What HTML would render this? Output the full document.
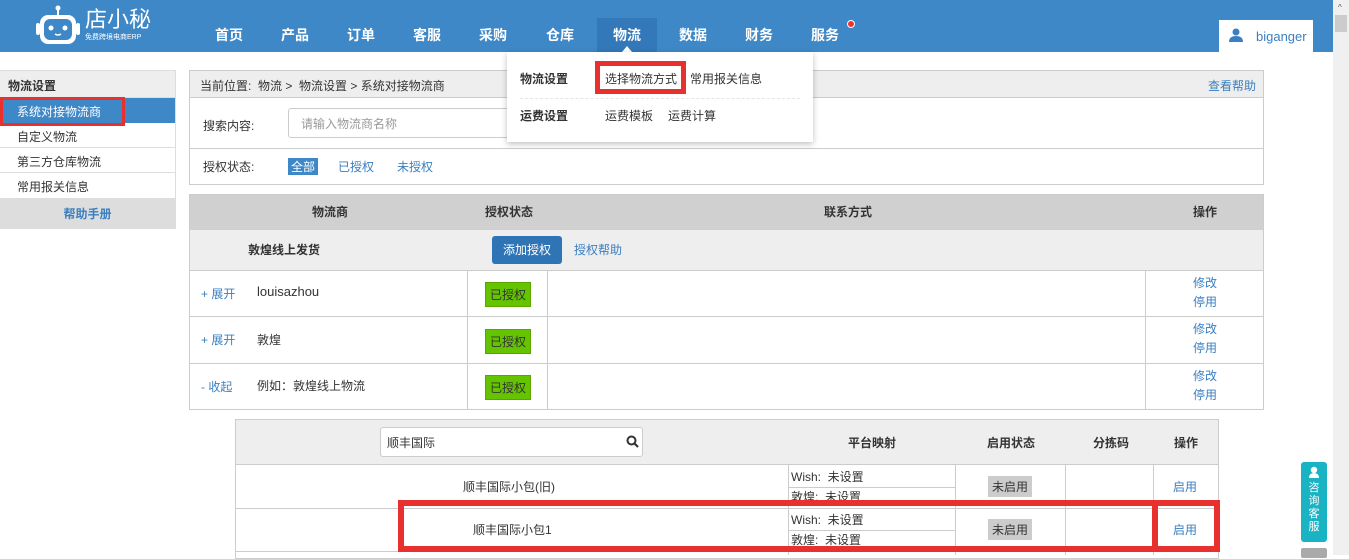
<!DOCTYPE html>
<html><head><meta charset="utf-8"><style>
*{margin:0;padding:0;box-sizing:border-box}
body{width:1349px;height:555px;overflow:hidden;position:relative;background:#fff;font-family:"Liberation Sans","Noto Sans CJK SC",sans-serif;font-size:12px;color:#333}
.a{position:absolute}
.nav{position:absolute;top:25px;font-size:14px;font-weight:bold;color:#fff;transform:translateX(-50%)}
.blue{color:#3a7fc0}
.bd{border:1px solid #ccc}
.c{text-align:center}
.tag{background:#65c400;color:#333;padding:3px 4px;font-size:12px;border:1px solid #5aa500}
</style></head><body>
<div class="a" style="left:0;top:0;width:1333px;height:52px;background:#3f88c8"></div>
<div class="a" style="left:597px;top:18px;width:60px;height:34px;background:#3378b8"></div>
<div class="a" style="left:622px;top:46px;width:0;height:0;border-left:5px solid transparent;border-right:5px solid transparent;border-bottom:6px solid #fff"></div>
<svg class="a" style="left:36px;top:4px" width="46" height="42" viewBox="0 0 46 42">
<circle cx="22" cy="4" r="2.5" fill="#fff"/><rect x="21" y="5" width="2" height="6" fill="#fff"/>
<rect x="4" y="11" width="36" height="29" rx="8" fill="#fff"/>
<rect x="0" y="19" width="4" height="12" rx="2" fill="#fff"/><rect x="40" y="19" width="4" height="12" rx="2" fill="#fff"/>
<rect x="8" y="15" width="28" height="21" rx="6" fill="#3f88c8"/>
<circle cx="15" cy="24" r="2.5" fill="#fff"/><circle cx="29" cy="24" r="2.5" fill="#fff"/>
<path d="M19 30 q3 2 6 0" stroke="#fff" stroke-width="1.5" fill="none"/>
</svg>
<div class="a" style="left:85px;top:8px;font-size:22px;color:#fff;line-height:24px">店小秘</div>
<div class="a" style="left:85px;top:34px;font-size:7px;color:#fff;line-height:8px">免费跨境电商ERP</div>
<div class="nav" style="left:229px">首页</div><div class="nav" style="left:295px">产品</div><div class="nav" style="left:361px">订单</div><div class="nav" style="left:427px">客服</div><div class="nav" style="left:493px">采购</div><div class="nav" style="left:560px">仓库</div><div class="nav" style="left:627px">物流</div><div class="nav" style="left:693px">数据</div><div class="nav" style="left:759px">财务</div><div class="nav" style="left:825px">服务</div>
<div class="a" style="left:847px;top:20px;width:8px;height:8px;border-radius:50%;background:#e33;border:1px solid #fff"></div>
<div class="a" style="left:1219px;top:20px;width:94px;height:32px;background:#fff"></div>
<svg class="a" style="left:1228px;top:28px" width="16" height="15"><circle cx="8" cy="4" r="3.5" fill="#3a7fc0"/><path d="M1 14 q0-6 7-6 q7 0 7 6z" fill="#3a7fc0"/></svg>
<div class="a" style="left:1256px;top:29px;font-size:13px;color:#3a7fc0">biganger</div>
<div class="a" style="left:1333px;top:0;width:16px;height:555px;background:#f0f0f0"></div>
<div class="a" style="left:1335px;top:15px;width:12px;height:17px;background:#ccc"></div>
<div class="a" style="left:1338px;top:3px;font-size:8px;color:#555">^</div>
<div class="a bd" style="left:-1px;top:70px;width:177px;height:159px;border-color:#ddd"></div>
<div class="a" style="left:0;top:71px;width:175px;height:27px;background:#eee;font-weight:bold;padding:6px 8px;border-bottom:1px solid #ddd">物流设置</div>
<div class="a" style="left:0;top:98px;width:175px;height:25px;background:#3f88c8;color:#fff;padding:5px 17px">系统对接物流商</div>
<div class="a" style="left:0;top:123px;width:175px;height:25px;padding:5px 17px;border-bottom:1px solid #ddd">自定义物流</div>
<div class="a" style="left:0;top:148px;width:175px;height:25px;padding:5px 17px;border-bottom:1px solid #ddd">第三方仓库物流</div>
<div class="a" style="left:0;top:173px;width:175px;height:25px;padding:5px 17px">常用报关信息</div>
<div class="a c blue" style="left:0;top:198px;width:175px;height:30px;background:#ddd;padding:7px 0;font-weight:bold">帮助手册</div>
<div class="a" style="left:0;top:97px;width:125px;height:29px;border:3px solid #e8302f"></div>
<div class="a bd" style="left:189px;top:70px;width:1075px;height:115px"></div>
<div class="a" style="left:190px;top:71px;width:1073px;height:27px;background:#eee;border-bottom:1px solid #ccc;padding:6px 10px">当前位置:&nbsp; 物流 &gt; &nbsp;物流设置 &gt; 系统对接物流商</div>
<div class="a blue" style="left:1208px;top:77px">查看帮助</div>
<div class="a" style="left:203px;top:117px">搜索内容:</div>
<div class="a" style="left:288px;top:108px;width:240px;height:30px;border:1px solid #ccc;border-radius:3px;color:#999;padding:6px 12px">请输入物流商名称</div>
<div class="a" style="left:190px;top:148px;width:1073px;height:1px;background:#ccc"></div>
<div class="a" style="left:203px;top:158px">授权状态:</div>
<div class="a" style="left:288px;top:158px;background:#3f88c8;color:#fff;padding:0 3px">全部</div>
<div class="a blue" style="left:338px;top:158px">已授权</div>
<div class="a blue" style="left:397px;top:158px">未授权</div>
<div class="a bd" style="left:189px;top:194px;width:1075px;height:216px"></div>
<div class="a" style="left:190px;top:195px;width:1073px;height:35px;background:#d0d0d0"></div>
<div class="a" style="left:312px;top:203px;font-weight:bold">物流商</div>
<div class="a" style="left:485px;top:203px;font-weight:bold">授权状态</div>
<div class="a" style="left:824px;top:203px;font-weight:bold">联系方式</div>
<div class="a" style="left:1193px;top:203px;font-weight:bold">操作</div>
<div class="a" style="left:190px;top:230px;width:1073px;height:40px;background:#eee"></div>
<div class="a" style="left:248px;top:241px;font-weight:bold">敦煌线上发货</div>
<div class="a" style="left:492px;top:236px;width:70px;height:28px;background:#2f75b5;border-radius:3px;color:#fff;padding:5px 0;text-align:center">添加授权</div>
<div class="a blue" style="left:574px;top:241px">授权帮助</div>
<div class="a" style="left:190px;top:270px;width:1073px;height:1px;background:#ccc"></div>
<div class="a" style="left:190px;top:316px;width:1073px;height:1px;background:#ccc"></div>
<div class="a" style="left:190px;top:363px;width:1073px;height:1px;background:#ccc"></div>
<div class="a" style="left:467px;top:270px;width:1px;height:139px;background:#ccc"></div>
<div class="a" style="left:547px;top:270px;width:1px;height:139px;background:#ccc"></div>
<div class="a" style="left:1145px;top:270px;width:1px;height:139px;background:#ccc"></div>
<div class="a blue" style="left:201px;top:285px">+ 展开</div><div class="a" style="left:257px;top:284px;font-size:13px">louisazhou</div>
<div class="a blue" style="left:201px;top:331px">+ 展开</div><div class="a" style="left:257px;top:331px">敦煌</div>
<div class="a blue" style="left:201px;top:378px">- 收起</div><div class="a" style="left:257px;top:377px">例如：敦煌线上物流</div>
<div class="a tag" style="left:485px;top:282px">已授权</div>
<div class="a tag" style="left:485px;top:329px">已授权</div>
<div class="a tag" style="left:485px;top:375px">已授权</div>
<div class="a blue" style="left:1193px;top:274px;line-height:19px">修改<br>停用</div>
<div class="a blue" style="left:1193px;top:320px;line-height:19px">修改<br>停用</div>
<div class="a blue" style="left:1193px;top:367px;line-height:19px">修改<br>停用</div>
<div class="a" style="left:507px;top:52px;width:306px;height:90px;background:#fff;box-shadow:0 2px 6px rgba(0,0,0,.25)"></div>
<div class="a" style="left:520px;top:70px;font-weight:bold">物流设置</div>
<div class="a" style="left:605px;top:70px">选择物流方式</div>
<div class="a" style="left:690px;top:70px">常用报关信息</div>
<div class="a" style="left:520px;top:98px;width:280px;border-top:1px dashed #e5e5e5"></div>
<div class="a" style="left:520px;top:107px;font-weight:bold">运费设置</div>
<div class="a" style="left:605px;top:107px">运费模板</div>
<div class="a" style="left:668px;top:107px">运费计算</div>
<div class="a" style="left:595px;top:61px;width:91px;height:33px;border:5px solid #e8302f"></div>
<div class="a bd" style="left:235px;top:419px;width:984px;height:140px"></div>
<div class="a" style="left:236px;top:420px;width:982px;height:45px;background:#eee;border-bottom:1px solid #ccc"></div>
<div class="a" style="left:380px;top:427px;width:263px;height:30px;background:#fff;border:1px solid #ccc;border-radius:3px;padding:6px 6px">顺丰国际</div>
<svg class="a" style="left:626px;top:435px" width="13" height="13"><circle cx="5.5" cy="5.5" r="4" stroke="#333" stroke-width="2" fill="none"/><path d="M8.5 8.5l3.5 3.5" stroke="#333" stroke-width="2.2"/></svg>
<div class="a" style="left:848px;top:434px;font-weight:bold">平台映射</div>
<div class="a" style="left:987px;top:434px;font-weight:bold">启用状态</div>
<div class="a" style="left:1093px;top:434px;font-weight:bold">分拣码</div>
<div class="a" style="left:1174px;top:434px;font-weight:bold">操作</div>
<div class="a" style="left:236px;top:508px;width:982px;height:1px;background:#ccc"></div>
<div class="a" style="left:236px;top:551px;width:982px;height:1px;background:#ccc"></div>
<div class="a" style="left:788px;top:465px;width:1px;height:90px;background:#ccc"></div>
<div class="a" style="left:955px;top:465px;width:1px;height:90px;background:#ccc"></div>
<div class="a" style="left:1065px;top:465px;width:1px;height:90px;background:#ccc"></div>
<div class="a" style="left:1153px;top:465px;width:1px;height:90px;background:#ccc"></div>
<div class="a" style="left:789px;top:487px;width:166px;height:1px;background:#ccc"></div>
<div class="a" style="left:789px;top:530px;width:166px;height:1px;background:#ccc"></div>
<div class="a" style="left:463px;top:478px">顺丰国际小包(旧)</div>
<div class="a" style="left:473px;top:521px">顺丰国际小包1</div>
<div class="a" style="left:791px;top:468px">Wish:&nbsp; 未设置</div>
<div class="a" style="left:791px;top:488px">敦煌:&nbsp; 未设置</div>
<div class="a" style="left:791px;top:511px">Wish:&nbsp; 未设置</div>
<div class="a" style="left:791px;top:531px">敦煌:&nbsp; 未设置</div>
<div class="a" style="left:988px;top:476px;background:#ccc;padding:2px 4px">未启用</div>
<div class="a" style="left:988px;top:519px;background:#ccc;padding:2px 4px">未启用</div>
<div class="a blue" style="left:1173px;top:478px">启用</div>
<div class="a blue" style="left:1173px;top:521px">启用</div>
<div class="a" style="left:398px;top:500px;width:754px;height:52px;border:6px solid #e8302f;border-right:none"></div>
<div class="a" style="left:1152px;top:500px;width:68px;height:52px;border:6px solid #e8302f"></div>
<div class="a" style="left:1301px;top:462px;width:26px;height:80px;background:#1ab3c4;border-radius:3px;color:#fff;font-size:11px;line-height:13px;text-align:center;padding-top:20px">咨<br>询<br>客<br>服</div>
<svg class="a" style="left:1308px;top:466px" width="12" height="12"><circle cx="6" cy="4" r="3.2" fill="#fff"/><path d="M1 12q0-5 5-5q5 0 5 5z" fill="#fff"/></svg>
<div class="a" style="left:1301px;top:548px;width:26px;height:10px;background:#aaa;border-radius:2px"></div>
</body></html>
